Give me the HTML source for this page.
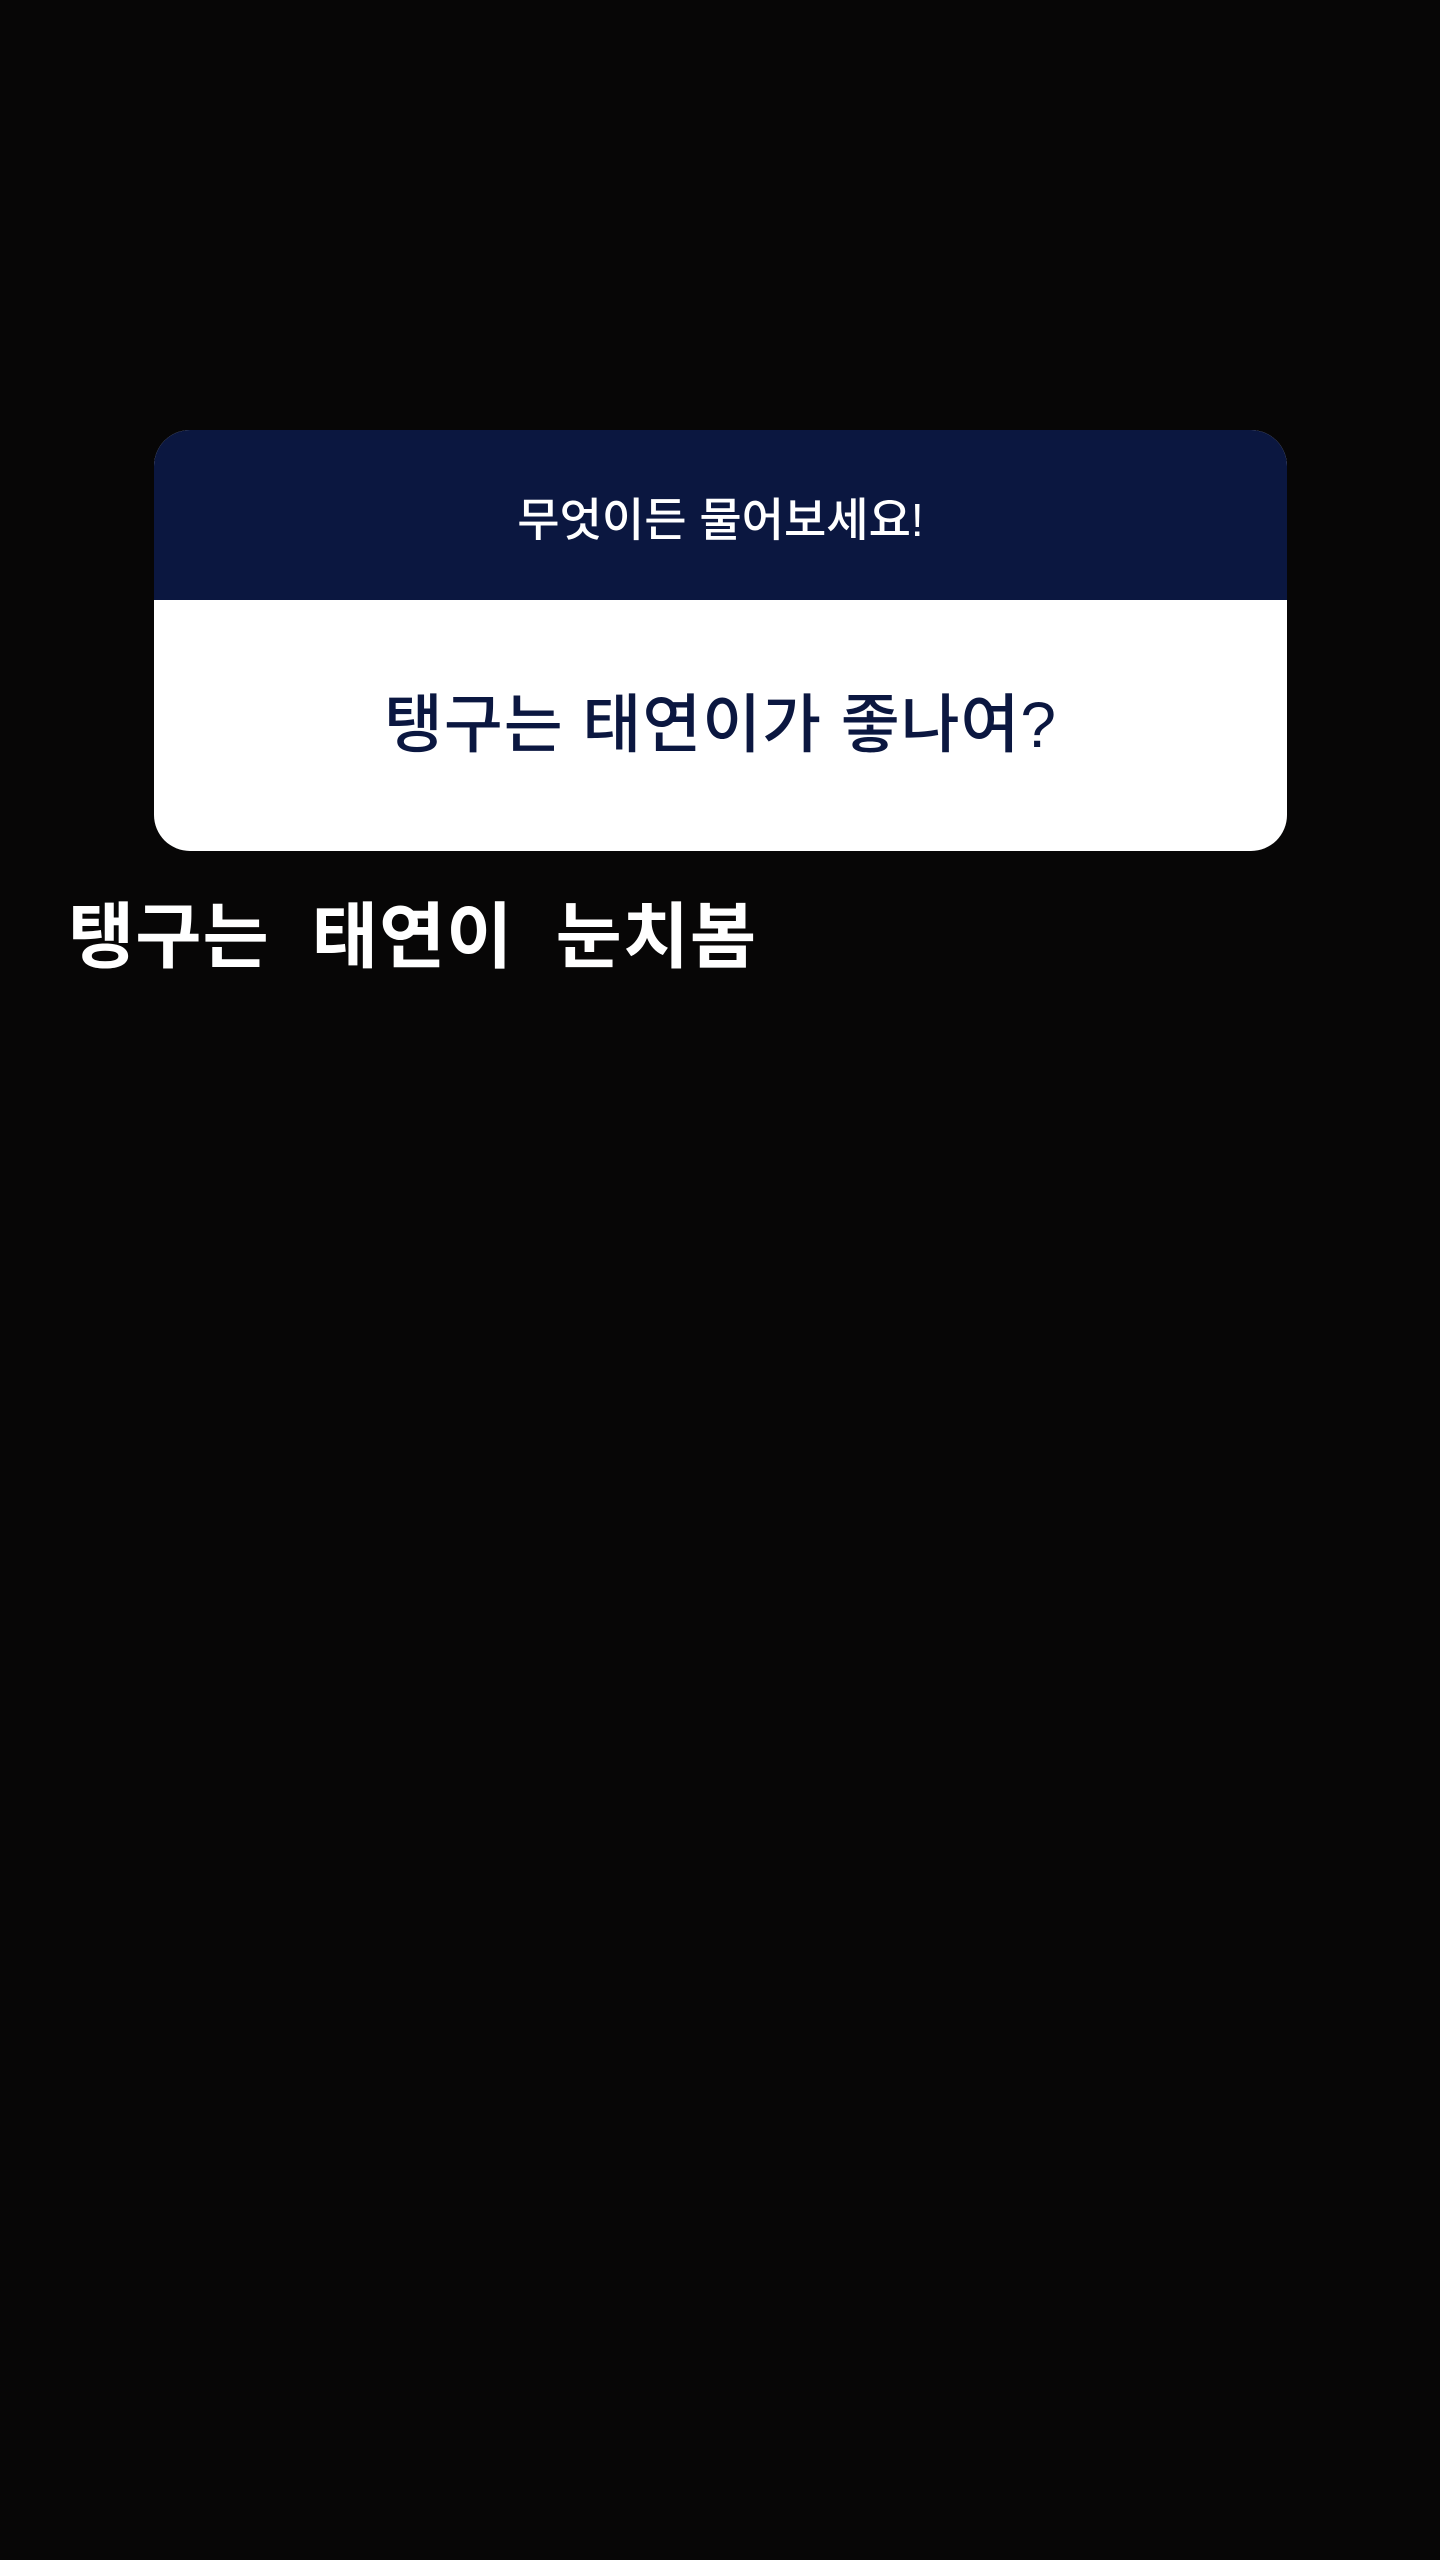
<!DOCTYPE html>
<html><head><meta charset="utf-8"><style>
html,body{margin:0;padding:0;background:#070606;width:1440px;height:2560px;overflow:hidden}
body{position:relative;font-family:"Liberation Sans","Noto Sans CJK KR",sans-serif}
.card{position:absolute;left:154px;top:430px;width:1133px;height:421px;border-radius:36px;overflow:hidden;background:#fff}
.hd{height:170px;background:#0b1740;color:#fff;font-size:46px;text-align:center;line-height:180px;font-weight:500;letter-spacing:0px}
.q{position:absolute;top:170px;left:0;right:0;height:251px;line-height:251px;text-align:center;color:#0b1740;font-size:64px;font-weight:500;letter-spacing:1px}
.t{position:absolute;left:68px;top:888px;color:#fff;font-size:72px;font-weight:700;white-space:pre;line-height:100px;letter-spacing:1px}
</style></head><body>
<div class="card"><div class="hd">무엇이든 물어보세요!</div><div class="q">탱구는 태연이가 좋나여?</div></div>
<div class="t">탱구는  태연이  눈치봄</div>
</body></html>
